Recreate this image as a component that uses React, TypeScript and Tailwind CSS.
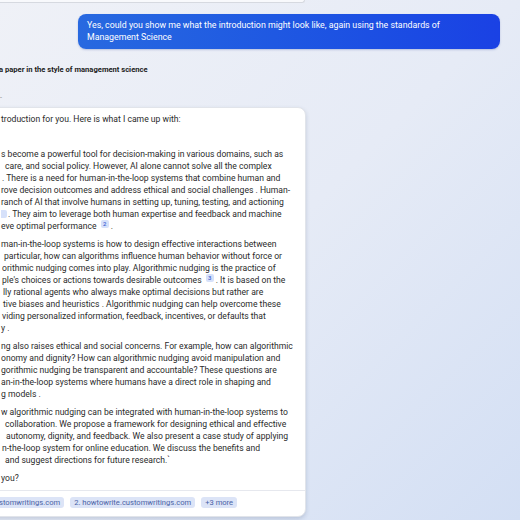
import React from "react";

type Line = { t: string; pl?: number; badge?: "cut" | "2" | "3"; after?: string };

const Badge = ({ n }: { n: string }) => (
  <span className="inline-flex items-center justify-center w-[8px] h-[8px] rounded-[2px] bg-[#d6e1fa] text-[#3d62d1] text-[6px] leading-[8px] relative top-[-3px] mx-[2px] font-medium">
    {n}
  </span>
);

const P = ({ lines }: { lines: Line[] }) => (
  <div className="flex flex-col">
    {lines.map((l, i) => (
      <div
        key={i}
        className="h-[12px] leading-[12px] whitespace-pre"
        style={{ paddingLeft: l.pl ?? 0 }}
      >
        {l.badge === "cut" ? (
          <span className="inline-block w-[6px] h-[8px] rounded-r-[2px] bg-[#d6e1fa] relative top-[1px] mr-[1px]" />
        ) : null}
        {l.t}
        {l.badge === "2" || l.badge === "3" ? <Badge n={l.badge} /> : null}
        {l.after ?? ""}
      </div>
    ))}
  </div>
);

export default function App() {
  const p1: Line[] = [
    { t: "s become a powerful tool for decision-making in various domains, such as", pl: 0 },
    { t: "care, and social policy. However, AI alone cannot solve all the complex", pl: 4 },
    { t: ". There is a need for human-in-the-loop systems that combine human and", pl: 1 },
    { t: "rove decision outcomes and address ethical and social challenges . Human-", pl: 0 },
    { t: "ranch of AI that involve humans in setting up, tuning, testing, and actioning", pl: 0 },
    { t: ". They aim to leverage both human expertise and feedback and machine", badge: "cut" },
    { t: "eve optimal performance ", badge: "2", after: "." },
  ];
  const p2: Line[] = [
    { t: "man-in-the-loop systems is how to design effective interactions between" },
    { t: "particular, how can algorithms influence human behavior without force or", pl: 3 },
    { t: "orithmic nudging comes into play. Algorithmic nudging is the practice of", pl: 1 },
    { t: "ple's choices or actions towards desirable outcomes ", pl: 1, badge: "3", after: ". It is based on the" },
    { t: "lly rational agents who always make optimal decisions but rather are", pl: 2 },
    { t: "tive biases and heuristics . Algorithmic nudging can help overcome these", pl: 2 },
    { t: "viding personalized information, feedback, incentives, or defaults that", pl: 1 },
    { t: "y ." },
  ];
  const p3: Line[] = [
    { t: "ng also raises ethical and social concerns. For example, how can algorithmic" },
    { t: "onomy and dignity? How can algorithmic nudging avoid manipulation and" },
    { t: "gorithmic nudging be transparent and accountable? These questions are" },
    { t: "an-in-the-loop systems where humans have a direct role in shaping and" },
    { t: "g models ." },
  ];
  const p4: Line[] = [
    { t: "w algorithmic nudging can be integrated with human-in-the-loop systems to" },
    { t: "collaboration. We propose a framework for designing ethical and effective", pl: 4 },
    { t: "autonomy, dignity, and feedback. We also present a case study of applying", pl: 5 },
    { t: "n-the-loop system for online education. We discuss the benefits and", pl: 1 },
    { t: "and suggest directions for future research.`", pl: 4 },
  ];

  return (
    <div
      className="w-[520px] h-[520px] overflow-hidden flex flex-col bg-gradient-to-br from-[#eff1f7] via-[#e6ebf6] to-[#d3dff4] text-[#2a2a2a]"
      style={{ fontFamily: "Roboto, 'Noto Sans', sans-serif" }}
    >
      {/* previous card bottom edge */}
      <div className="h-[3px] w-[305px] shrink-0 bg-[#f8f9fc] border-b border-r border-[#d6d9e0] rounded-br-[6px]" />

      {/* user bubble */}
      <div className="mt-[11px] ml-[78px] w-[422px] h-[35px] shrink-0 rounded-[8px] bg-gradient-to-r from-[#2869e0] to-[#1a41e4] text-white text-[8.8px] leading-[12px] pl-[9px] pt-[5px] shadow-[0_1px_2px_rgba(30,60,160,0.25)]">
        <div>Yes, could you show me what the introduction might look like, again using the standards of</div>
        <div>Management Science</div>
      </div>

      {/* search line */}
      <div className="mt-[16px] h-[10px] leading-[10px] text-[7.6px] font-bold text-[#1c1c1c] whitespace-nowrap -ml-[1px]">
        a paper in the style of management science
      </div>
      <div className="mt-[18px] h-[10px] leading-[10px] text-[7px] text-[#888] whitespace-nowrap">
        -
      </div>

      {/* assistant card */}
      <div className="mt-[4px] -ml-[20px] w-[326px] shrink-0 bg-white rounded-[8px] border border-[#e1e4ea] shadow-[0_2px_4px_rgba(40,60,100,0.18)] text-[8.6px]">
        <div className="pl-[20px] pt-[5px] pb-[6px] flex flex-col">
          <P lines={[{ t: "troduction for you. Here is what I came up with:" }]} />
          <div className="mt-[23px]">
            <P lines={p1} />
          </div>
          <div className="mt-[6px]">
            <P lines={p2} />
          </div>
          <div className="mt-[6px]">
            <P lines={p3} />
          </div>
          <div className="mt-[6px]">
            <P lines={p4} />
          </div>
          <div className="mt-[6px]">
            <P lines={[{ t: "you?" }]} />
          </div>
        </div>
        <div className="border-t border-[#e6e8ee] pl-[20px] pt-[6px] pb-[8px] flex gap-[6px] text-[7.6px] text-[#4a63a6]">
          <span className="h-[11px] leading-[11px] bg-[#dce4f7] rounded-r-[3px] pr-[4px] -ml-[2px] whitespace-nowrap">stomwritings.com</span>
          <span className="h-[11px] leading-[11px] bg-[#dce4f7] rounded-[3px] px-[4px] whitespace-nowrap">2. howtowrite.customwritings.com</span>
          <span className="h-[11px] leading-[11px] bg-[#dce4f7] rounded-[3px] px-[4px] whitespace-nowrap">+3 more</span>
        </div>
      </div>
    </div>
  );
}
